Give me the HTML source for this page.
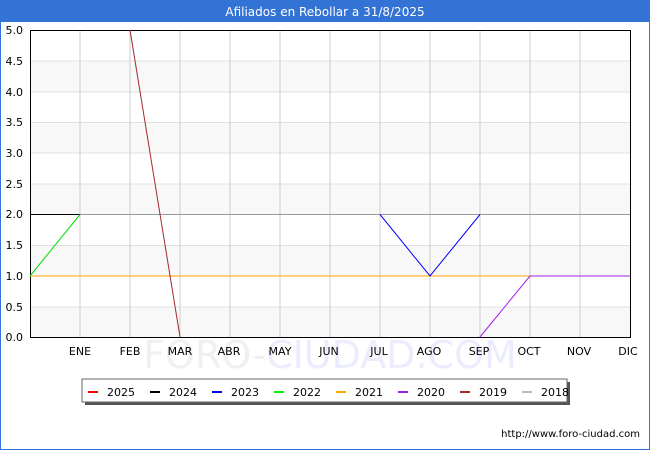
<!DOCTYPE html><html><head><style>body{margin:0;width:650px;height:450px;overflow:hidden;background:#fff}</style></head><body>
<svg width="650" height="450" xmlns="http://www.w3.org/2000/svg" font-family="DejaVu Sans, sans-serif" font-size="11">
<rect x="0" y="0" width="650" height="450" fill="#fff" stroke="#3373d6" stroke-width="2"/>
<rect x="0" y="0" width="650" height="22" fill="#3373d6"/>
<text x="325" y="16" fill="#fff" font-size="12" text-anchor="middle">Afiliados en Rebollar a 31/8/2025</text>
<g fill="#f8f8f8"><rect x="30" y="61" width="600" height="30.7"/><rect x="30" y="122.4" width="600" height="30.7"/><rect x="30" y="183.8" width="600" height="30.7"/><rect x="30" y="245.2" width="600" height="30.7"/><rect x="30" y="306.6" width="600" height="30.7"/></g>
<g stroke="#e0e0e0"><line x1="30" x2="630" y1="61" y2="61"/><line x1="30" x2="630" y1="92" y2="92"/><line x1="30" x2="630" y1="122.5" y2="122.5"/><line x1="30" x2="630" y1="153" y2="153"/><line x1="30" x2="630" y1="184" y2="184"/><line x1="30" x2="630" y1="245.5" y2="245.5"/><line x1="30" x2="630" y1="276" y2="276"/><line x1="30" x2="630" y1="307" y2="307"/></g>
<g stroke="#ccc"><line x1="80" x2="80" y1="30" y2="337"/><line x1="130" x2="130" y1="30" y2="337"/><line x1="180" x2="180" y1="30" y2="337"/><line x1="230" x2="230" y1="30" y2="337"/><line x1="280" x2="280" y1="30" y2="337"/><line x1="330" x2="330" y1="30" y2="337"/><line x1="380" x2="380" y1="30" y2="337"/><line x1="430" x2="430" y1="30" y2="337"/><line x1="480" x2="480" y1="30" y2="337"/><line x1="530" x2="530" y1="30" y2="337"/><line x1="580" x2="580" y1="30" y2="337"/></g>
<text x="330" y="368" font-size="38" fill="#f0f0f0" text-anchor="middle">FORO-<tspan fill="#ececff">CIUDAD.COM</tspan></text>
<rect x="30.5" y="30.5" width="600" height="307" fill="none" stroke="#000"/>
<line x1="80" y1="214.5" x2="630" y2="214.5" stroke="#999"/>
<g fill="none" stroke-width="1">
<polyline points="30,276 530,276" stroke="#ffa500"/>
<polyline points="30,214.5 80,214.5" stroke="#000"/>
<polyline points="30,276 80,214.5" stroke="#00e000"/>
<polyline points="380,214.5 430,276 480,214.5" stroke="#0000ff"/>
<polyline points="480,337 530,276 630,276" stroke="#a020f0"/>
<polyline points="130,30 180,337" stroke="#a52a2a"/>
</g>
<g text-anchor="end"><text x="23" y="34">5.0</text><text x="23" y="65">4.5</text><text x="23" y="96">4.0</text><text x="23" y="126">3.5</text><text x="23" y="157">3.0</text><text x="23" y="188">2.5</text><text x="23" y="218">2.0</text><text x="23" y="249">1.5</text><text x="23" y="280">1.0</text><text x="23" y="311">0.5</text><text x="23" y="341">0.0</text></g>
<g text-anchor="middle"><text x="80" y="355">ENE</text><text x="130" y="355">FEB</text><text x="180" y="355">MAR</text><text x="229" y="355">ABR</text><text x="280" y="355">MAY</text><text x="329" y="355">JUN</text><text x="379" y="355">JUL</text><text x="429" y="355">AGO</text><text x="479" y="355">SEP</text><text x="529" y="355">OCT</text><text x="579" y="355">NOV</text><text x="628" y="355">DIC</text></g>
<rect x="85" y="382" width="485" height="23" fill="#555"/>
<rect x="82" y="379" width="485" height="23" fill="#fff" stroke="#666"/>
<g stroke-width="2"><line x1="88" x2="98" y1="392" y2="392" stroke="#f00"/><line x1="150" x2="160" y1="392" y2="392" stroke="#000"/><line x1="212" x2="222" y1="392" y2="392" stroke="#00f"/><line x1="274" x2="284" y1="392" y2="392" stroke="#0e0"/><line x1="336" x2="346" y1="392" y2="392" stroke="#ffa500"/><line x1="398" x2="408" y1="392" y2="392" stroke="#a020f0"/><line x1="460" x2="470" y1="392" y2="392" stroke="#a52a2a"/><line x1="522" x2="532" y1="392" y2="392" stroke="#bbb"/></g>
<g><text x="107" y="396">2025</text><text x="169" y="396">2024</text><text x="231" y="396">2023</text><text x="293" y="396">2022</text><text x="355" y="396">2021</text><text x="417" y="396">2020</text><text x="479" y="396">2019</text><text x="541" y="396">2018</text></g>
<text x="640" y="437" font-size="10" text-anchor="end">http://www.foro-ciudad.com</text>
</svg></body></html>
